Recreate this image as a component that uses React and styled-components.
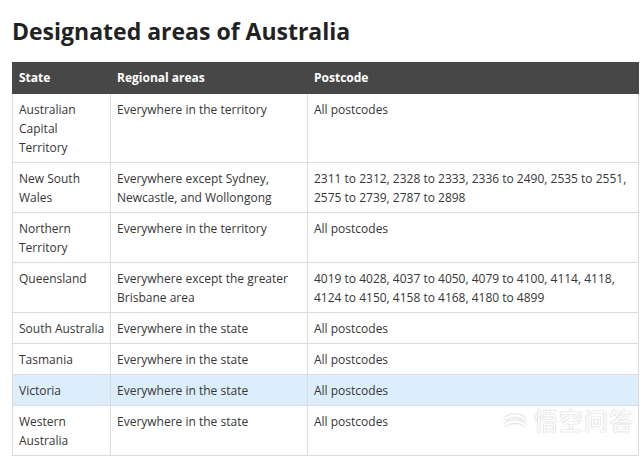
import React from 'react'
import styled, { createGlobalStyle } from 'styled-components'

const GlobalStyle = createGlobalStyle`
  html, body {
    margin: 0;
    padding: 0;
    background: #fff;
  }
  body {
    font-family: 'Open Sans', 'Noto Sans', sans-serif;
    color: #333;
  }
`

const Page = styled.div`
  position: relative;
  width: 640px;
  height: 457px;
  overflow: hidden;
  padding: 15px 1px 0 12px;
  box-sizing: border-box;
`

const Title = styled.h1`
  margin: 0 0 14px;
  font-size: 23px;
  line-height: 33px;
  font-weight: 700;
  color: #222;
`

const Table = styled.table`
  width: 627px;
  table-layout: fixed;
  border-collapse: collapse;
  font-size: 12px;
  line-height: 19px;
`

const HeadCell = styled.th`
  background: #474747;
  color: #fff;
  font-weight: 700;
  text-align: left;
  padding: 5px 4px 6px 6px;
  border: 1px solid #474747;
  width: ${props => props.w || 'auto'};
`

const Row = styled.tr`
  background: ${props => (props.active ? '#dcedfb' : '#fff')};
`

const Cell = styled.td`
  vertical-align: top;
  padding: 6px 4px 5px 6px;
  border: 1px solid #dcdcdc;
  color: #363636;
`

const Watermark = styled.div`
  position: absolute;
  right: 6px;
  bottom: 20px;
  display: flex;
  align-items: center;
  gap: 6px;
  font-family: 'Noto Sans CJK SC', sans-serif;
  font-size: 24px;
  letter-spacing: 1px;
  color: #fff;
  text-shadow: 0 0 1px #bbb, 0 0 2px #ddd;

  svg {
    filter: drop-shadow(0 0 1px #bbb);
  }
`

const rows = [
  ['Australian Capital Territory', 'Everywhere in the territory', 'All postcodes'],
  ['New South Wales', 'Everywhere except Sydney, Newcastle, and Wollongong', '2311 to 2312, 2328 to 2333, 2336 to 2490, 2535 to 2551, 2575 to 2739, 2787 to 2898'],
  ['Northern Territory', 'Everywhere in the territory', 'All postcodes'],
  ['Queensland', 'Everywhere except the greater Brisbane area', '4019 to 4028, 4037 to 4050, 4079 to 4100, 4114, 4118, 4124 to 4150, 4158 to 4168, 4180 to 4899'],
  ['South Australia', 'Everywhere in the state', 'All postcodes'],
  ['Tasmania', 'Everywhere in the state', 'All postcodes'],
  ['Victoria', 'Everywhere in the state', 'All postcodes', true],
  ['Western Australia', 'Everywhere in the state', 'All postcodes']
]

const App = () => (
  <Page>
    <GlobalStyle />
    <Title>Designated areas of Australia</Title>
    <Table>
      <thead>
        <tr>
          <HeadCell w='87px'>State</HeadCell>
          <HeadCell w='186px'>Regional areas</HeadCell>
          <HeadCell>Postcode</HeadCell>
        </tr>
      </thead>
      <tbody>
        {rows.map(([state, area, code, active], k) => (
          <Row key={`row-${k}`} active={active}>
            <Cell>{state}</Cell>
            <Cell>{area}</Cell>
            <Cell>{code}</Cell>
          </Row>
        ))}
      </tbody>
    </Table>
    <Watermark>
      <svg width='26' height='18' viewBox='0 0 26 18'>
        <path d='M3 8 Q13 1 23 8' stroke='#fff' strokeWidth='2.5' fill='none' />
        <path d='M3 14 Q13 7 23 14' stroke='#fff' strokeWidth='2.5' fill='none' />
      </svg>
      <span>悟空问答</span>
    </Watermark>
  </Page>
)

export default App
